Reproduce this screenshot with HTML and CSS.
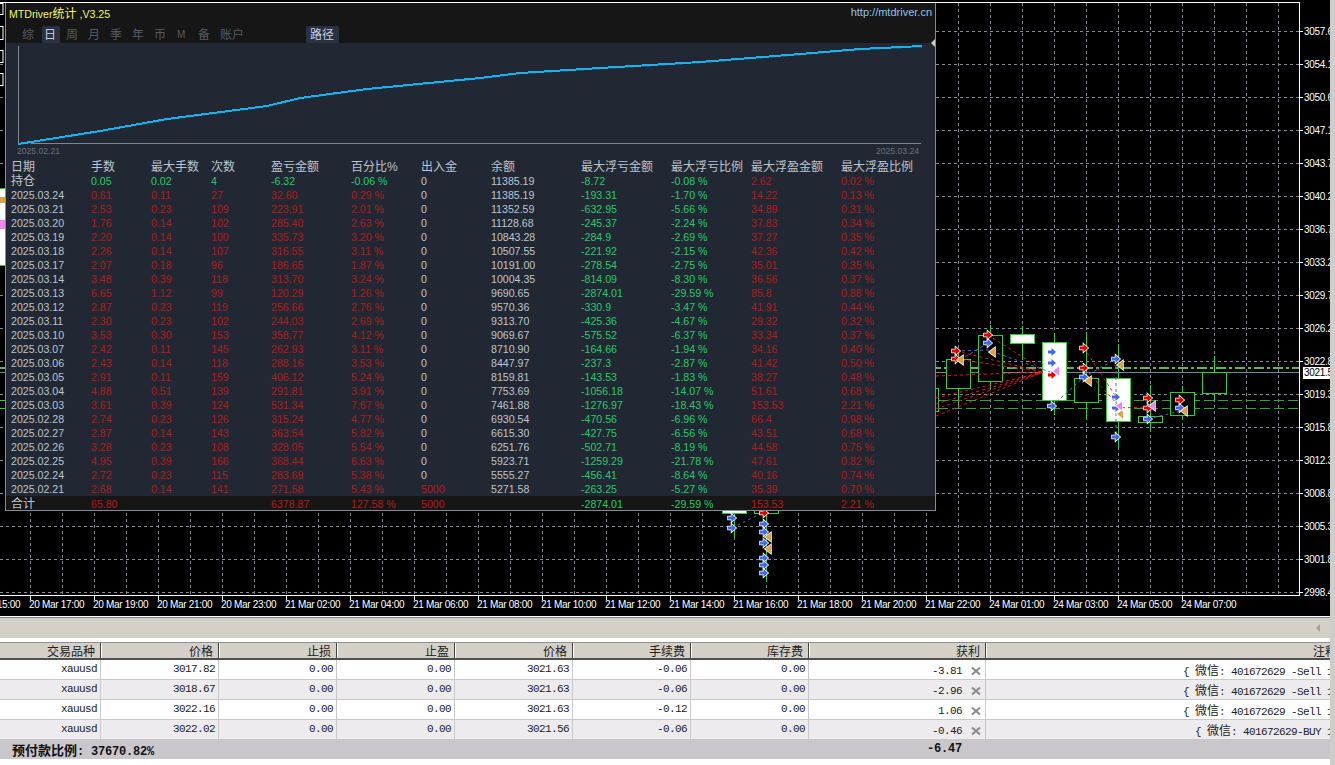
FILE: index.html
```html
<!DOCTYPE html>
<html lang="en">
<head>
    <meta charset="UTF-8">
    <title>MTDriver</title>
    <link rel="stylesheet" href="styles.css">
</head>
<body>
<div class="window">
<div class="main">
    <div class="chart">
        <svg class="plot" width="1330" height="616" viewBox="0 0 1330 616">
            <defs>
                <polygon id="arrow" points="-4,-1.5 -0.5,-1.5 -0.5,-4 4,0 -0.5,4 -0.5,1.5 -4,1.5"/>
                <polygon id="tri" points="3,-4.5 3,4.5 -3,0"/>
            </defs>
            <!-- grid -->
            <path class="grid" d="M30.5 3V595M62.5 3V595M94.5 3V595M126.5 3V595M158.5 3V595M190.5 3V595M222.5 3V595M254.5 3V595M286.5 3V595M318.5 3V595M350.5 3V595M382.5 3V595M414.5 3V595M446.5 3V595M478.5 3V595M510.5 3V595M542.5 3V595M574.5 3V595M606.5 3V595M638.5 3V595M670.5 3V595M702.5 3V595M734.5 3V595M766.5 3V595M798.5 3V595M830.5 3V595M862.5 3V595M894.5 3V595M926.5 3V595M958.5 3V595M990.5 3V595M1022.5 3V595M1054.5 3V595M1086.5 3V595M1118.5 3V595M1150.5 3V595M1182.5 3V595M1214.5 3V595M1246.5 3V595M1278.5 3V595"/>
            <path class="grid" d="M0 31.5H1299M0 64.5H1299M0 97.5H1299M0 130.5H1299M0 163.5H1299M0 196.5H1299M0 229.5H1299M0 262.5H1299M0 295.5H1299M0 328.5H1299M0 361.5H1299M0 394.5H1299M0 427.5H1299M0 460.5H1299M0 493.5H1299M0 526.5H1299M0 559.5H1299M0 592.5H1299"/>

            <!-- levels -->
            <path class="level-main" d="M0 368H1299"/>
            <path class="level" d="M0 400.5H1299M0 408.5H1299"/>
            <path class="bid" d="M0 372.5H1299"/>

            <!-- candles -->
            <path class="wick" d="M958.5 350V405M990.5 325V388M1022.5 326V360M1054.5 333V415M1086.5 332V420M1118.5 344V448M1150.5 385V430M1182.5 386V420M1214.5 356V400M734.5 505V538M766.5 505V582"/>
            <rect class="up" x="930.5" y="388.5" width="8" height="23"/>
            <rect class="up" x="946.5" y="359.5" width="24" height="29"/>
            <rect class="up" x="978.5" y="335.5" width="24" height="46"/>
            <rect class="down" x="1010.5" y="334.5" width="24" height="9"/>
            <rect class="down" x="1042.5" y="342.5" width="24" height="58"/>
            <rect class="up" x="1074.5" y="378.5" width="24" height="24"/>
            <rect class="down" x="1106.5" y="378.5" width="24" height="43"/>
            <rect class="up" x="1138.5" y="416.5" width="24" height="6"/>
            <rect class="up" x="1170.5" y="392.5" width="24" height="23"/>
            <rect class="up" x="1202.5" y="372.5" width="24" height="21"/>
            <rect class="down" x="722.5" y="505.5" width="24" height="8"/>
            <rect class="up" x="754.5" y="505.5" width="24" height="8"/>

            <!-- order lines -->
            <path class="trade-red" d="M936 404L1043 372M936 398L1043 372M936 416L1043 372M936 409L1043 372M956 351L1043 372M956 359L1043 372M988 335L1043 370M936 376L1043 372M1084 348L1116 397M1084 368L1119 406M1116 408L1152 407"/>
            <path class="trade-blue" d="M956 351L988 350L1050 372M960 360L988 343M1116 359V437M1084 377L1116 359M1052 406L1084 377M1148 419L1180 411M732 528L764 512"/>

            <!-- arrows -->
            <g class="buy">
                <use href="#arrow" x="988" y="343"/><use href="#arrow" x="1052" y="352"/><use href="#arrow" x="1052" y="363"/>
                <use href="#arrow" x="1084" y="377"/><use href="#arrow" x="1052" y="406"/><use href="#arrow" x="1116" y="359"/>
                <use href="#arrow" x="1116" y="397"/><use href="#arrow" x="1116" y="408"/><use href="#arrow" x="1148" y="419"/>
                <use href="#arrow" x="1116" y="437"/><use href="#arrow" x="1180" y="408"/>
                <use href="#arrow" x="732" y="518"/><use href="#arrow" x="732" y="528"/><use href="#arrow" x="764" y="524"/>
                <use href="#arrow" x="764" y="532"/><use href="#arrow" x="764" y="543"/><use href="#arrow" x="764" y="558"/>
                <use href="#arrow" x="764" y="565"/><use href="#arrow" x="764" y="573"/>
            </g>
            <g class="sell">
                <use href="#arrow" x="956" y="351"/><use href="#arrow" x="956" y="359"/><use href="#arrow" x="988" y="335"/>
                <use href="#arrow" x="1084" y="348"/><use href="#arrow" x="1084" y="368"/><use href="#arrow" x="1052" y="375"/>
                <use href="#arrow" x="1148" y="398"/><use href="#arrow" x="1148" y="408"/><use href="#arrow" x="1180" y="400"/>
                <use href="#arrow" x="764" y="513"/>
            </g>
            <g class="close-gold">
                <use href="#tri" x="960" y="360"/><use href="#tri" x="992" y="352"/><use href="#tri" x="1088" y="381"/>
                <use href="#tri" x="1120" y="365"/><use href="#tri" x="1120" y="414"/><use href="#tri" x="1184" y="411"/>
                <use href="#tri" x="768" y="537"/><use href="#tri" x="768" y="549"/>
            </g>
            <g class="close-pink">
                <use href="#tri" x="1056" y="371"/><use href="#tri" x="1119" y="406"/><use href="#tri" x="1152" y="406"/>
            </g>

            <!-- bits left of the panel -->
            <rect class="stub" x="-4" y="3.5" width="7" height="11"/>
            <rect class="stub" x="-4" y="26.5" width="7" height="13"/>
            <rect class="stub" x="-4" y="50.5" width="7" height="12"/>
            <rect class="stub" x="-4" y="73.5" width="7" height="12"/>
            <rect class="down" x="-4" y="188.5" width="12" height="77"/>
            <rect x="0" y="197" width="5" height="6" fill="#d9a441"/>
            <rect x="0" y="220" width="5" height="9" fill="#ee88ee"/>
            <rect class="up" x="-4" y="400.5" width="10" height="8"/>

            <!-- frame -->
            <path class="frame" d="M0 2.5H1299.5V595.5H0"/>
            <path class="frame" d="M1300 31.5h3M1300 64.5h3M1300 97.5h3M1300 130.5h3M1300 163.5h3M1300 196.5h3M1300 229.5h3M1300 262.5h3M1300 295.5h3M1300 328.5h3M1300 361.5h3M1300 394.5h3M1300 427.5h3M1300 460.5h3M1300 493.5h3M1300 526.5h3M1300 559.5h3M1300 592.5h3"/>
            <path class="frame" d="M30.5 596v4M94.5 596v4M158.5 596v4M222.5 596v4M286.5 596v4M350.5 596v4M414.5 596v4M478.5 596v4M542.5 596v4M606.5 596v4M670.5 596v4M734.5 596v4M798.5 596v4M862.5 596v4M926.5 596v4M990.5 596v4M1054.5 596v4M1118.5 596v4M1182.5 596v4"/>

            <!-- price axis -->
            <g class="axis">
                <text x="1304" y="35">3057.6</text><text x="1304" y="68">3054.1</text><text x="1304" y="101">3050.6</text>
                <text x="1304" y="134">3047.1</text><text x="1304" y="167">3043.7</text><text x="1304" y="200">3040.2</text>
                <text x="1304" y="233">3036.7</text><text x="1304" y="266">3033.2</text><text x="1304" y="299">3029.7</text>
                <text x="1304" y="332">3026.2</text><text x="1304" y="365">3022.8</text><text x="1304" y="398">3019.3</text>
                <text x="1304" y="431">3015.8</text><text x="1304" y="464">3012.3</text><text x="1304" y="497">3008.8</text>
                <text x="1304" y="530">3005.3</text><text x="1304" y="563">3001.8</text><text x="1304" y="596">2998.4</text>
            </g>
            <rect x="1303" y="367" width="27" height="12" fill="#fff"/>
            <text class="axis-bid" x="1304" y="376">3021.5</text>

            <!-- time axis -->
            <g class="axis">
                <text x="-35" y="608">20 Mar 15:00</text><text x="29" y="608">20 Mar 17:00</text><text x="93" y="608">20 Mar 19:00</text>
                <text x="157" y="608">20 Mar 21:00</text><text x="221" y="608">20 Mar 23:00</text><text x="285" y="608">21 Mar 02:00</text>
                <text x="349" y="608">21 Mar 04:00</text><text x="413" y="608">21 Mar 06:00</text><text x="477" y="608">21 Mar 08:00</text>
                <text x="541" y="608">21 Mar 10:00</text><text x="605" y="608">21 Mar 12:00</text><text x="669" y="608">21 Mar 14:00</text>
                <text x="733" y="608">21 Mar 16:00</text><text x="797" y="608">21 Mar 18:00</text><text x="861" y="608">21 Mar 20:00</text>
                <text x="925" y="608">21 Mar 22:00</text><text x="989" y="608">24 Mar 01:00</text><text x="1053" y="608">24 Mar 03:00</text>
                <text x="1117" y="608">24 Mar 05:00</text><text x="1181" y="608">24 Mar 07:00</text>
            </g>
        </svg>

        <div class="stats">
            <div class="stats-top">
                <div class="title-line">
                    <span class="title">MTDriver<span class="cn">统计</span> ,V3.25</span>
                    <span class="link">http://mtdriver.cn</span>
                </div>
                <div class="tabs">
                    <span class="tab">综</span>
                    <span class="tab on">日</span>
                    <span class="tab">周</span>
                    <span class="tab">月</span>
                    <span class="tab">季</span>
                    <span class="tab">年</span>
                    <span class="tab">币</span>
                    <span class="tab tab-m">M</span>
                    <span class="tab">备</span>
                    <span class="tab tab-wide">账户</span>
                    <span class="tab tab-path on">路径</span>
                </div>
            </div>

            <svg class="curve" width="929" height="117" viewBox="6 43 929 117">
                <path class="curve-axis" d="M18.5 46V143.5H921"/>
                <polyline class="curve-glow" points="18,145 100,132 167,120 267,107 300,99 367,90 480,79 520,74 600,69 700,63 800,55 860,50 922,47"/>
                <polyline class="curve-line" points="18,144 100,131 167,119 267,106 300,98 367,89 480,78 520,73 600,68 700,62 800,54 860,49 922,46"/>
                <polygon points="931,43 935,39 935,47" fill="#c8ccd0"/>
                <text class="curve-date" x="17" y="154">2025.02.21</text>
                <text class="curve-date" x="919" y="154" text-anchor="end">2025.03.24</text>
            </svg>

            <div class="row head"><span>日期</span><span>手数</span><span>最大手数</span><span>次数</span><span>盈亏金额</span><span>百分比%</span><span>出入金</span><span>余额</span><span>最大浮亏金额</span><span>最大浮亏比例</span><span>最大浮盈金额</span><span>最大浮盈比例</span></div>
            <div class="row hold"><span class="cn">持仓</span><span>0.05</span><span>0.02</span><span>4</span><span>-6.32</span><span>-0.06 %</span><span>0</span><span>11385.19</span><span>-8.72</span><span>-0.08 %</span><span>2.62</span><span>0.02 %</span></div>
            <div class="row"><span>2025.03.24</span><span>0.61</span><span>0.11</span><span>27</span><span>32.60</span><span>0.29 %</span><span>0</span><span>11385.19</span><span>-193.31</span><span>-1.70 %</span><span>14.22</span><span>0.13 %</span></div>
            <div class="row"><span>2025.03.21</span><span>2.53</span><span>0.23</span><span>109</span><span>223.91</span><span>2.01 %</span><span>0</span><span>11352.59</span><span>-632.95</span><span>-5.66 %</span><span>34.89</span><span>0.31 %</span></div>
            <div class="row"><span>2025.03.20</span><span>1.76</span><span>0.14</span><span>102</span><span>285.40</span><span>2.63 %</span><span>0</span><span>11128.68</span><span>-245.37</span><span>-2.24 %</span><span>37.83</span><span>0.34 %</span></div>
            <div class="row"><span>2025.03.19</span><span>2.20</span><span>0.14</span><span>100</span><span>335.73</span><span>3.20 %</span><span>0</span><span>10843.28</span><span>-284.9</span><span>-2.69 %</span><span>37.27</span><span>0.35 %</span></div>
            <div class="row"><span>2025.03.18</span><span>2.26</span><span>0.14</span><span>107</span><span>316.55</span><span>3.11 %</span><span>0</span><span>10507.55</span><span>-221.92</span><span>-2.15 %</span><span>42.36</span><span>0.42 %</span></div>
            <div class="row"><span>2025.03.17</span><span>2.07</span><span>0.18</span><span>96</span><span>186.65</span><span>1.87 %</span><span>0</span><span>10191.00</span><span>-278.54</span><span>-2.75 %</span><span>35.01</span><span>0.35 %</span></div>
            <div class="row"><span>2025.03.14</span><span>3.48</span><span>0.39</span><span>118</span><span>313.70</span><span>3.24 %</span><span>0</span><span>10004.35</span><span>-814.09</span><span>-8.30 %</span><span>36.56</span><span>0.37 %</span></div>
            <div class="row"><span>2025.03.13</span><span>6.65</span><span>1.12</span><span>99</span><span>120.29</span><span>1.26 %</span><span>0</span><span>9690.65</span><span>-2874.01</span><span>-29.59 %</span><span>85.8</span><span>0.88 %</span></div>
            <div class="row"><span>2025.03.12</span><span>2.87</span><span>0.23</span><span>119</span><span>256.66</span><span>2.76 %</span><span>0</span><span>9570.36</span><span>-330.9</span><span>-3.47 %</span><span>41.91</span><span>0.44 %</span></div>
            <div class="row"><span>2025.03.11</span><span>2.30</span><span>0.23</span><span>102</span><span>244.03</span><span>2.69 %</span><span>0</span><span>9313.70</span><span>-425.36</span><span>-4.67 %</span><span>29.32</span><span>0.32 %</span></div>
            <div class="row"><span>2025.03.10</span><span>3.53</span><span>0.30</span><span>153</span><span>358.77</span><span>4.12 %</span><span>0</span><span>9069.67</span><span>-575.52</span><span>-6.37 %</span><span>33.34</span><span>0.37 %</span></div>
            <div class="row"><span>2025.03.07</span><span>2.42</span><span>0.11</span><span>145</span><span>262.93</span><span>3.11 %</span><span>0</span><span>8710.90</span><span>-164.66</span><span>-1.94 %</span><span>34.16</span><span>0.40 %</span></div>
            <div class="row"><span>2025.03.06</span><span>2.43</span><span>0.14</span><span>118</span><span>288.16</span><span>3.53 %</span><span>0</span><span>8447.97</span><span>-237.3</span><span>-2.87 %</span><span>41.42</span><span>0.50 %</span></div>
            <div class="row"><span>2025.03.05</span><span>2.91</span><span>0.11</span><span>159</span><span>406.12</span><span>5.24 %</span><span>0</span><span>8159.81</span><span>-143.53</span><span>-1.83 %</span><span>38.27</span><span>0.48 %</span></div>
            <div class="row"><span>2025.03.04</span><span>4.88</span><span>0.51</span><span>139</span><span>291.81</span><span>3.91 %</span><span>0</span><span>7753.69</span><span>-1056.18</span><span>-14.07 %</span><span>51.61</span><span>0.68 %</span></div>
            <div class="row"><span>2025.03.03</span><span>3.61</span><span>0.39</span><span>124</span><span>531.34</span><span>7.67 %</span><span>0</span><span>7461.88</span><span>-1276.97</span><span>-18.43 %</span><span>153.53</span><span>2.21 %</span></div>
            <div class="row"><span>2025.02.28</span><span>2.74</span><span>0.23</span><span>126</span><span>315.24</span><span>4.77 %</span><span>0</span><span>6930.54</span><span>-470.56</span><span>-6.96 %</span><span>66.4</span><span>0.98 %</span></div>
            <div class="row"><span>2025.02.27</span><span>2.87</span><span>0.14</span><span>143</span><span>363.54</span><span>5.82 %</span><span>0</span><span>6615.30</span><span>-427.75</span><span>-6.56 %</span><span>43.51</span><span>0.68 %</span></div>
            <div class="row"><span>2025.02.26</span><span>3.28</span><span>0.23</span><span>108</span><span>328.05</span><span>5.54 %</span><span>0</span><span>6251.76</span><span>-502.71</span><span>-8.19 %</span><span>44.58</span><span>0.75 %</span></div>
            <div class="row"><span>2025.02.25</span><span>4.95</span><span>0.39</span><span>166</span><span>368.44</span><span>6.63 %</span><span>0</span><span>5923.71</span><span>-1259.29</span><span>-21.78 %</span><span>47.61</span><span>0.82 %</span></div>
            <div class="row"><span>2025.02.24</span><span>2.72</span><span>0.23</span><span>115</span><span>283.69</span><span>5.38 %</span><span>0</span><span>5555.27</span><span>-456.41</span><span>-8.64 %</span><span>40.16</span><span>0.74 %</span></div>
            <div class="row"><span>2025.02.21</span><span>2.68</span><span>0.14</span><span>141</span><span>271.58</span><span>5.43 %</span><span class="red">5000</span><span>5271.58</span><span>-263.25</span><span>-5.27 %</span><span>35.39</span><span>0.70 %</span></div>
            <div class="row total"><span class="cn">合计</span><span>65.80</span><span></span><span></span><span>6378.87</span><span>127.58 %</span><span class="red">5000</span><span></span><span>-2874.01</span><span>-29.59 %</span><span>153.53</span><span>2.21 %</span></div>
        </div>
    </div>

    <div class="terminal">
        <div class="band"><span class="scroll-left"></span></div>
        <div class="tbl-head">
            <span>交易品种</span><span>价格</span><span>止损</span><span>止盈</span><span>价格</span><span>手续费</span><span>库存费</span><span>获利</span><span class="note-head">注释</span>
        </div>
        <div class="tbl-row">
            <span>xauusd</span><span>3017.82</span><span>0.00</span><span>0.00</span><span>3021.63</span><span>-0.06</span><span>0.00</span>
            <span class="profit">-3.81<svg class="x" width="10" height="10" viewBox="0 0 10 10"><path d="M1 1.5L9 8.5M9 1.5L1 8.5"/></svg></span>
            <span class="note">{ <b>微信</b>: 401672629 -Sell 1</span>
        </div>
        <div class="tbl-row">
            <span>xauusd</span><span>3018.67</span><span>0.00</span><span>0.00</span><span>3021.63</span><span>-0.06</span><span>0.00</span>
            <span class="profit">-2.96<svg class="x" width="10" height="10" viewBox="0 0 10 10"><path d="M1 1.5L9 8.5M9 1.5L1 8.5"/></svg></span>
            <span class="note">{ <b>微信</b>: 401672629 -Sell 1</span>
        </div>
        <div class="tbl-row">
            <span>xauusd</span><span>3022.16</span><span>0.00</span><span>0.00</span><span>3021.63</span><span>-0.12</span><span>0.00</span>
            <span class="profit">1.06<svg class="x" width="10" height="10" viewBox="0 0 10 10"><path d="M1 1.5L9 8.5M9 1.5L1 8.5"/></svg></span>
            <span class="note">{ <b>微信</b>: 401672629 -Sell 1</span>
        </div>
        <div class="tbl-row">
            <span>xauusd</span><span>3022.02</span><span>0.00</span><span>0.00</span><span>3021.56</span><span>-0.06</span><span>0.00</span>
            <span class="profit">-0.46<svg class="x" width="10" height="10" viewBox="0 0 10 10"><path d="M1 1.5L9 8.5M9 1.5L1 8.5"/></svg></span>
            <span class="note">{ <b>微信</b>: 401672629-BUY 1</span>
        </div>
        <div class="tbl-foot">
            <span class="margin"><b>预付款比例</b>: 37670.82%</span>
            <span class="sum">-6.47</span>
        </div>
    </div>
</div>
<div class="edge"></div>
</div>
</body>
</html>
```

FILE: styles.css
```css
* {
    margin: 0;
    padding: 0;
    box-sizing: border-box;
}

html, body {
    width: 100%;
    height: 100%;
    overflow: hidden;
    background: #fff;
}

body {
    font-family: "Liberation Sans", "Noto Sans CJK SC", sans-serif;
}

.window {
    display: flex;
    height: 765px;
}

.main {
    width: 1330px;
    overflow: hidden;
}

.edge {
    width: 5px;
    background: #d0cdc9;
}

/* chart */
.chart {
    position: relative;
    height: 616px;
    background: #000;
}

.plot {
    display: block;
}

.grid {
    fill: none;
    stroke: #858b96;
    stroke-width: 1;
    stroke-dasharray: 3 3;
    shape-rendering: crispEdges;
}

.frame {
    fill: none;
    stroke: #fff;
    stroke-width: 1;
    shape-rendering: crispEdges;
}

.bid {
    fill: none;
    stroke: #778899;
    shape-rendering: crispEdges;
}

.level {
    fill: none;
    stroke: #2fa52f;
    stroke-dasharray: 10 4;
    shape-rendering: crispEdges;
}

.level-main {
    fill: none;
    stroke: #5ab85a;
    stroke-width: 2;
    stroke-dasharray: 10 3 3 3;
    shape-rendering: crispEdges;
}

.wick {
    fill: none;
    stroke: #32cd32;
    shape-rendering: crispEdges;
}

.up {
    fill: #000;
    stroke: #32cd32;
    shape-rendering: crispEdges;
}

.down {
    fill: #fff;
    stroke: #32cd32;
    shape-rendering: crispEdges;
}

.stub {
    fill: #000;
    stroke: #fff;
}

.trade-red {
    fill: none;
    stroke: #e01818;
    stroke-dasharray: 3 3;
}

.trade-blue {
    fill: none;
    stroke: #4169e1;
    stroke-dasharray: 3 3;
}

.buy use, .sell use, .close-gold use, .close-pink use {
    stroke: #fff;
    stroke-width: 1.5;
    paint-order: stroke;
}

.buy use { fill: #4169e1; }
.sell use { fill: #e00000; }
.close-gold use { fill: #d9a441; }
.close-pink use { fill: #ee88ee; }

.axis text {
    font-size: 10px;
    letter-spacing: -0.3px;
    fill: #fff;
}

.axis-bid {
    font-size: 10px;
    letter-spacing: -0.3px;
    fill: #000;
}

/* stats panel */
.stats {
    position: absolute;
    left: 5px;
    top: 3px;
    width: 931px;
    background: #222833;
    border: 1px solid #7f8ca0;
    border-top: 0;
    font-size: 10.6px;
}

.stats-top {
    height: 40px;
    background: #161616;
}

.title-line {
    display: flex;
    justify-content: space-between;
    align-items: center;
    height: 18px;
    padding: 0 3px;
}

.title {
    color: #f5f56a;
    font-size: 10.6px;
}

.cn {
    font-size: 12px;
}

.link {
    color: #8fc4ec;
    font-size: 11px;
}

.tabs {
    display: flex;
    gap: 4px;
    height: 17px;
    margin-top: 5px;
    padding-left: 14px;
    font-size: 12px;
    line-height: 18px;
    color: #555b66;
}

.tab {
    width: 18px;
    padding-left: 2px;
    border-radius: 2px 2px 0 0;
}

.tab.on {
    background: #2a3140;
    color: #c8d0e0;
}

.tab-m {
    font-size: 10px;
    padding-left: 3px;
}

.tab-wide {
    width: 28px;
}

.tab-path {
    width: 33px;
    margin-left: 56px;
    padding-left: 4px;
}

.curve {
    display: block;
    overflow: visible;
}

.curve-axis {
    fill: none;
    stroke: #80858c;
    shape-rendering: crispEdges;
}

.curve-line {
    fill: none;
    stroke: #1fb0ea;
    stroke-width: 2;
    shape-rendering: crispEdges;
}

.curve-glow {
    fill: none;
    stroke: #164f6c;
    stroke-width: 1;
    shape-rendering: crispEdges;
}

.curve-date {
    font-size: 8.6px;
    fill: #6c727c;
}

.row {
    display: grid;
    grid-template-columns: 80px 60px 60px 60px 80px 70px 70px 90px 90px 80px 90px 1fr;
    height: 14px;
    line-height: 14px;
    padding-left: 5px;
    white-space: nowrap;
    color: #bcc4d0;
}

.row span:nth-child(n+2):nth-child(-n+6),
.row span:nth-child(n+11),
.row .red {
    color: #b01c1c;
}

.row span:nth-child(9),
.row span:nth-child(10) {
    color: #22cc6a;
}

.row.hold span:nth-child(n+2):nth-child(-n+6) {
    color: #22cc6a;
}

.row.head {
    font-size: 12px;
}

.row.head span:nth-child(n) {
    color: #bcc4d0;
}

.row.total {
    background: #161616;
    line-height: 17px;
}

/* terminal */
.terminal {
    border-top: 1px solid #fff;
    font-family: "Liberation Mono", "Noto Sans CJK SC", monospace;
    font-size: 11px;
    letter-spacing: -0.6px;
    color: #222;
}

.band {
    display: flex;
    justify-content: flex-end;
    align-items: center;
    height: 21px;
    padding-right: 10px;
    border-top: 1px solid #808080;
    background: #d4d0c8;
}

.scroll-left {
    border: 4px solid transparent;
    border-left: 0;
    border-right: 4px solid #a0a0a0;
}

.tbl-head, .tbl-row, .tbl-foot {
    display: grid;
    grid-template-columns: 101px repeat(6, 118px) 177px 355px;
    width: 1341px;
    white-space: nowrap;
}

.tbl-head {
    height: 18px;
    margin-top: 4px;
    background: #d4d0c8;
    border-top: 1px solid #909090;
    border-bottom: 2px solid #505050;
    font-family: "Noto Sans CJK SC", sans-serif;
    font-size: 12px;
    letter-spacing: 0;
    line-height: 15px;
    text-align: right;
}

.tbl-head span {
    padding-right: 5px;
    border-right: 1px solid #404040;
    box-shadow: 1px 0 0 #fff;
}

.tbl-head .note-head {
    padding-right: 4px;
    border-right: 0;
    box-shadow: none;
}

.tbl-row {
    height: 20px;
    line-height: 19px;
    background: #fff;
    border-bottom: 1px solid #c8c8c8;
    text-align: right;
}

.tbl-row:nth-child(even) {
    background: #eeebef;
}

.tbl-row span {
    padding-right: 3px;
    border-right: 1px solid #c8c8c8;
}

.tbl-row .profit {
    display: flex;
    justify-content: flex-end;
    align-items: center;
    padding-right: 4px;
}

.x {
    margin-left: 9px;
    fill: none;
    stroke: #8a8a8a;
    stroke-width: 2;
}

.tbl-row .note {
    padding-right: 8px;
    border-right: 0;
}

.note b, .margin b {
    font-family: "Noto Sans CJK SC", sans-serif;
    font-size: 12px;
    letter-spacing: 0;
    font-weight: 400;
}

.tbl-foot {
    height: 19px;
    line-height: 19px;
    background: #c9c7cb;
    font-size: 12px;
    letter-spacing: -0.2px;
    font-weight: 700;
    color: #111;
}

.margin {
    grid-column: 1 / 8;
    padding-left: 12px;
}

.margin b {
    font-size: 13px;
    font-weight: 700;
}

.sum {
    padding-right: 24px;
    text-align: right;
}
```
